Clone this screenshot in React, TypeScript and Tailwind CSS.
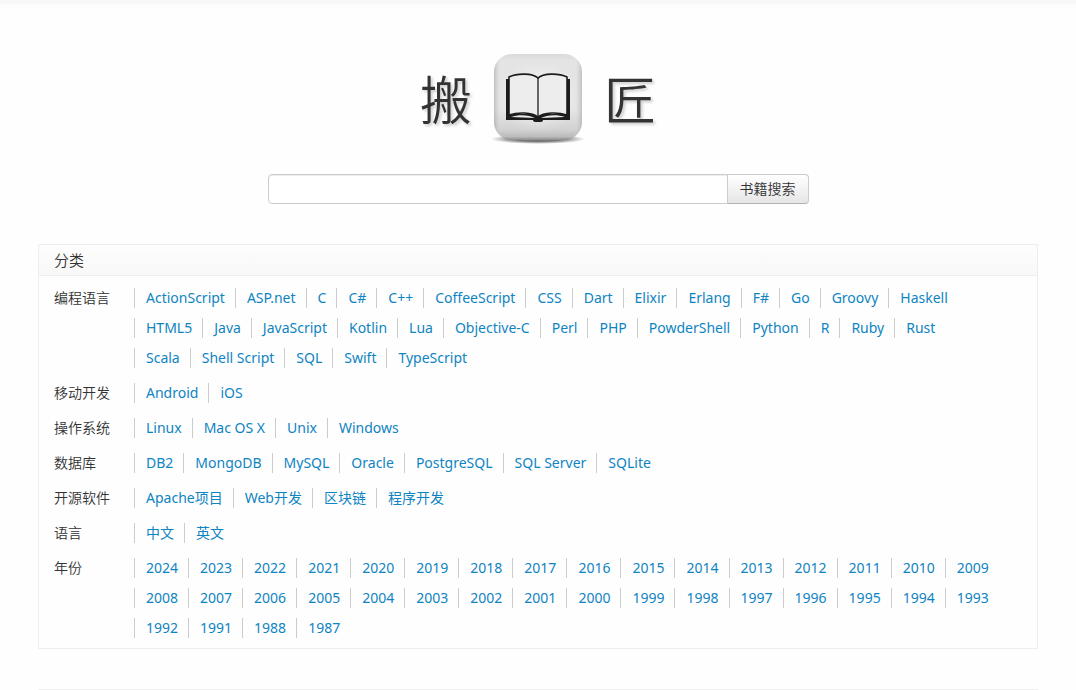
import React from 'react';

interface Category {
  title: string;
  items: string[];
}

const categories: Category[] = [
  {
    title: '编程语言',
    items: [
      'ActionScript', 'ASP.net', 'C', 'C#', 'C++', 'CoffeeScript', 'CSS', 'Dart', 'Elixir', 'Erlang', 'F#', 'Go', 'Groovy', 'Haskell',
      'HTML5', 'Java', 'JavaScript', 'Kotlin', 'Lua', 'Objective-C', 'Perl', 'PHP', 'PowderShell', 'Python', 'R', 'Ruby', 'Rust',
      'Scala', 'Shell Script', 'SQL', 'Swift', 'TypeScript',
    ],
  },
  { title: '移动开发', items: ['Android', 'iOS'] },
  { title: '操作系统', items: ['Linux', 'Mac OS X', 'Unix', 'Windows'] },
  { title: '数据库', items: ['DB2', 'MongoDB', 'MySQL', 'Oracle', 'PostgreSQL', 'SQL Server', 'SQLite'] },
  { title: '开源软件', items: ['Apache项目', 'Web开发', '区块链', '程序开发'] },
  { title: '语言', items: ['中文', '英文'] },
  {
    title: '年份',
    items: [
      '2024', '2023', '2022', '2021', '2020', '2019', '2018', '2017', '2016', '2015', '2014', '2013', '2012', '2011', '2010', '2009',
      '2008', '2007', '2006', '2005', '2004', '2003', '2002', '2001', '2000', '1999', '1998', '1997', '1996', '1995', '1994', '1993',
      '1992', '1991', '1988', '1987',
    ],
  },
];

const BookLogo = () => (
  <svg width="100" height="100" viewBox="0 0 100 100" aria-hidden="true">
    <defs>
      <linearGradient id="tile" x1="0" y1="0" x2="0" y2="1">
        <stop offset="0" stopColor="#dadada" />
        <stop offset="0.08" stopColor="#e4e4e4" />
        <stop offset="0.65" stopColor="#e4e4e4" />
        <stop offset="0.88" stopColor="#d2d2d2" />
        <stop offset="0.96" stopColor="#bcbcbc" />
        <stop offset="1" stopColor="#8c8c8c" />
      </linearGradient>
      <linearGradient id="edge" x1="0" y1="0" x2="1" y2="0">
        <stop offset="0" stopColor="#888" stopOpacity="0.4" />
        <stop offset="0.07" stopColor="#bbb" stopOpacity="0" />
        <stop offset="0.93" stopColor="#bbb" stopOpacity="0" />
        <stop offset="1" stopColor="#888" stopOpacity="0.4" />
      </linearGradient>
      <radialGradient id="glow" cx="0.5" cy="0.5" r="0.5">
        <stop offset="0" stopColor="#fff" stopOpacity="0.7" />
        <stop offset="1" stopColor="#fff" stopOpacity="0" />
      </radialGradient>
      <radialGradient id="ground" cx="0.5" cy="0.5" r="0.5">
        <stop offset="0.5" stopColor="#555" stopOpacity="0.8" />
        <stop offset="1" stopColor="#555" stopOpacity="0" />
      </radialGradient>
    </defs>
    <ellipse cx="50" cy="90" rx="47" ry="5" fill="url(#ground)" />
    <rect x="6" y="5" width="88" height="86" rx="18" fill="url(#tile)" />
    <rect x="6" y="5" width="88" height="86" rx="18" fill="url(#edge)" />
    <ellipse cx="50" cy="48" rx="42" ry="36" fill="url(#glow)" />
    {/* cover */}
    <path d="M18 30h4v35h56V30h4v41H55c0 1-1 2-2 2h-6c-1 0-2-1-2-2H18z" fill="#1c1c1c" />
    {/* pages */}
    <path
      d="M21 28c8-4 24-4 29 1 5-5 21-5 29-1v38c-9-3-23-3-29 2-6-5-20-5-29-2z"
      fill="#ededed"
      stroke="#1c1c1c"
      strokeWidth="1.6"
    />
    <path d="M23 68c8-3 19-2 24 1zM77 68c-8-3-19-2-24 1z" fill="#e8e8e8" />
    <path d="M50 29v39" stroke="#1c1c1c" strokeWidth="1.3" />
  </svg>
);

const CategoryRow = ({ title, items }: Category) => (
  <div className="flex pt-[5px]">
    <h3 className="w-20 shrink-0 leading-[30px] font-[350]">{title}</h3>
    <ul className="flex flex-1 flex-wrap">
      {items.map((item) => (
        <li key={item} className="flex h-[30px] items-center">
          <a href="#" className="border-l border-[#ccc] pr-[10px] pl-[11px] leading-5 text-[#0f84c2] hover:underline">
            {item}
          </a>
        </li>
      ))}
    </ul>
  </div>
);

export default function App() {
  return (
    <div className="bg-[#fefefe] font-['Noto_Sans','Noto_Sans_CJK_SC',sans-serif] text-sm text-[#333]">
      <div className="h-2 border-b-4 border-[#fcfcfc] bg-[#f7f7f7]" />

      <main className="mx-auto max-w-[1000px]">
        <h1 className="flex items-center justify-center gap-4 pt-10 text-[52px] leading-[100px] font-[350] text-shadow-[2px_2px_3px_#ccc]">
          <span className="pt-0.5">搬</span>
          <BookLogo />
          <span className="pt-0.5">匠</span>
        </h1>

        <form className="mt-6 flex justify-center" onSubmit={(e) => e.preventDefault()}>
          <input
            type="text"
            aria-label="书籍搜索"
            className="h-[30px] w-[460px] rounded-l border border-[#ccc] bg-white px-2 shadow-[inset_0_1px_1px_rgba(0,0,0,0.075)] outline-none focus:border-sky-400"
          />
          <button
            type="submit"
            className="-ml-px h-[30px] rounded-r border border-[#ccc] border-b-[#b3b3b3] bg-linear-to-b from-white to-[#e6e6e6] px-3 font-[350]"
          >
            书籍搜索
          </button>
        </form>

        <section className="mt-10 border border-[#eee] pb-[5px]">
          <h2 className="border-b border-[#eee] bg-linear-to-b from-[#fdfdfd] to-[#f8f8f8] px-[15px] text-[15px] leading-[30px] font-[350]">分类</h2>
          <div className="pt-[2px] pr-9 pl-[15px]">
            {categories.map((category) => (
              <CategoryRow key={category.title} title={category.title} items={category.items} />
            ))}
          </div>
        </section>

        <hr className="mt-10 border-[#eee]" />
      </main>
    </div>
  );
}
